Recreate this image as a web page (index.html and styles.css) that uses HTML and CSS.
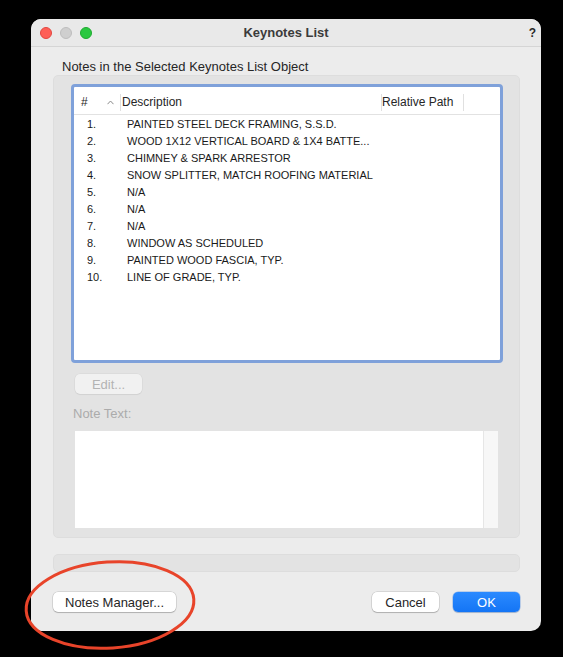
FILE: index.html
```html
<!DOCTYPE html>
<html lang="en">
<head>
    <meta charset="UTF-8">
    <meta name="viewport" content="width=device-width, initial-scale=1.0">
    <title>Keynotes List</title>
    <link rel="stylesheet" href="styles.css">
</head>
<body>
    <div class="screen">
        <div class="window">
            <div class="titlebar">
                <div class="lights">
                    <span class="light red"></span>
                    <span class="light gray"></span>
                    <span class="light green"></span>
                </div>
                <div class="title">Keynotes List</div>
                <div class="help">?</div>
            </div>

            <div class="content">
                <div class="section-label">Notes in the Selected Keynotes List Object</div>

                <div class="group">
                    <div class="table">
                        <div class="table-head">
                            <div class="col-num">#</div>
                            <div class="col-sort">
                                <svg width="7" height="5" viewBox="0 0 7 5"><polyline points="0.5,4.2 3.5,1 6.5,4.2" fill="none" stroke="#8a8a8a" stroke-width="1"/></svg>
                            </div>
                            <div class="col-desc">Description</div>
                            <div class="col-path">Relative Path</div>
                            <div class="col-rest"></div>
                        </div>
                        <div class="rows">
                            <div class="row"><span class="num">1.</span><span class="desc">PAINTED STEEL DECK FRAMING, S.S.D.</span></div>
                            <div class="row"><span class="num">2.</span><span class="desc">WOOD 1X12 VERTICAL BOARD &amp; 1X4 BATTE...</span></div>
                            <div class="row"><span class="num">3.</span><span class="desc">CHIMNEY &amp; SPARK ARRESTOR</span></div>
                            <div class="row"><span class="num">4.</span><span class="desc">SNOW SPLITTER, MATCH ROOFING MATERIAL</span></div>
                            <div class="row"><span class="num">5.</span><span class="desc">N/A</span></div>
                            <div class="row"><span class="num">6.</span><span class="desc">N/A</span></div>
                            <div class="row"><span class="num">7.</span><span class="desc">N/A</span></div>
                            <div class="row"><span class="num">8.</span><span class="desc">WINDOW AS SCHEDULED</span></div>
                            <div class="row"><span class="num">9.</span><span class="desc">PAINTED WOOD FASCIA, TYP.</span></div>
                            <div class="row"><span class="num">10.</span><span class="desc">LINE OF GRADE, TYP.</span></div>
                        </div>
                    </div>

                    <button class="edit-button" disabled>Edit...</button>
                    <div class="note-label">Note Text:</div>
                    <div class="note-box">
                        <div class="note-text"></div>
                        <div class="note-scroll"></div>
                    </div>
                </div>

                <div class="status-bar"></div>

                <div class="actions">
                    <button class="btn wide">Notes Manager...</button>
                    <div class="actions-right">
                        <button class="btn">Cancel</button>
                        <button class="btn primary">OK</button>
                    </div>
                </div>
            </div>
        </div>
    </div>

    <!-- red annotation ring around the Notes Manager button -->
    <svg class="annotation" width="190" height="104" viewBox="0 0 190 104">
        <ellipse cx="90" cy="50" rx="84" ry="43" transform="rotate(-4 90 50)" fill="none" stroke="#e8442a" stroke-width="3"/>
    </svg>
</body>
</html>
```

FILE: styles.css
```css
body {
    margin: 0;
    padding: 0;
    height: 657px;
    background-color: black;
    overflow: hidden;
    position: relative;
    font-family: 'Liberation Sans', Arial, sans-serif;
    color: #1f1f1f;
}

.screen {
    padding: 19px 0 0 31px;
}

.window {
    width: 510px;
    height: 612px;
    background-color: #ececec;
    border-radius: 10px;
    overflow: hidden;
}

/* Title bar */
.titlebar {
    height: 27px;
    border-bottom: 1px solid #d5d5d5;
    background-color: #e9e9e9;
    display: grid;
    grid-template-columns: 1fr auto 1fr;
    align-items: center;
}

.lights {
    display: flex;
    gap: 8px;
    padding-left: 9px;
}

.light {
    width: 12px;
    height: 12px;
    border-radius: 50%;
    box-sizing: border-box;
}

.light.red {
    background-color: #fe5f57;
    border: 0.5px solid #e2463f;
}

.light.gray {
    background-color: #cfcfcf;
    border: 0.5px solid #bdbdbd;
}

.light.green {
    background-color: #2ac840;
    border: 0.5px solid #1eaa2f;
}

.title {
    font-size: 13px;
    font-weight: bold;
    color: #3b3b3b;
}

.help {
    text-align: right;
    padding-right: 5px;
    font-size: 12px;
    font-weight: bold;
    color: #2a2a2a;
}

/* Content */
.content {
    padding: 0 21px 0 22px;
}

.section-label {
    margin-top: 12px;
    padding-left: 9px;
    font-size: 13px;
    line-height: 16px;
    color: #262626;
}

.group {
    height: 463px;
    box-sizing: border-box;
    background-color: #e3e3e3;
    border: 1px solid #dddddd;
    border-radius: 5px;
    padding: 8px 0 0 17px;
}

.table {
    width: 432px;
    height: 279px;
    box-sizing: border-box;
    border: 3px solid #7fa1da;
    border-radius: 4px;
    background-color: white;
}

.table-head {
    height: 24px;
    padding-top: 3px;
    border-bottom: 1px solid #e2e2e2;
    display: flex;
    align-items: center;
    font-size: 12px;
    color: #262626;
}

.col-num {
    width: 27px;
    padding-left: 7px;
    box-sizing: border-box;
}

.col-sort {
    width: 18px;
    display: flex;
    justify-content: center;
    padding-right: 1px;
}

.col-desc, .col-path {
    border-left: 1px solid #e0e0e0;
    line-height: 17px;
}

.col-desc {
    width: 259px;
    padding-left: 1px;
}

.col-path {
    width: 81px;
}

.col-rest {
    border-left: 1px solid #e0e0e0;
    height: 17px;
}

.row {
    height: 17px;
    display: flex;
    align-items: center;
    font-size: 11px;
    color: #1a1a1a;
}

.num {
    width: 53px;
    padding-left: 13px;
    box-sizing: border-box;
}

/* Edit + note text */
.edit-button {
    display: block;
    margin: 11px 0 0 4px;
    width: 67px;
    height: 20px;
    border: none;
    border-radius: 5px;
    background-color: #f1f1f1;
    box-shadow: 0 0 0 0.5px rgba(0, 0, 0, 0.06), 0 1px 1px rgba(0, 0, 0, 0.05);
    font-family: inherit;
    font-size: 13px;
    color: #b3b3b3;
    padding: 0;
}

.note-label {
    margin: 12px 0 0 2px;
    font-size: 13px;
    line-height: 16px;
    color: #ababab;
}

.note-box {
    margin: 9px 0 0 4px;
    width: 423px;
    height: 97px;
    display: flex;
    background-color: white;
}

.note-text {
    flex: 1;
}

.note-scroll {
    width: 14px;
    background-color: #f7f7f7;
    border-left: 1px solid #e6e6e6;
}

.status-bar {
    margin-top: 16px;
    height: 18px;
    box-sizing: border-box;
    background-color: #e3e3e3;
    border: 1px solid #dddddd;
    border-radius: 5px;
}

/* Bottom buttons */
.actions {
    margin-top: 20px;
    display: flex;
    justify-content: space-between;
}

.actions-right {
    display: flex;
    gap: 14px;
}

.btn {
    height: 20px;
    min-width: 67px;
    padding: 0 9px;
    border: none;
    border-radius: 5px;
    background-color: white;
    box-shadow: 0 0 0 0.5px rgba(0, 0, 0, 0.18), 0 1px 1px rgba(0, 0, 0, 0.18);
    font-family: inherit;
    font-size: 13px;
    color: #262626;
}

.btn.wide {
    width: 123px;
}

.btn.primary {
    background: linear-gradient(#2b8aff, #1475f5);
    color: white;
    box-shadow: 0 0 0 0.5px rgba(0, 90, 220, 0.4), 0 1px 1px rgba(0, 0, 0, 0.15);
}

.annotation {
    position: absolute;
    left: 20px;
    top: 555px;
}
```
